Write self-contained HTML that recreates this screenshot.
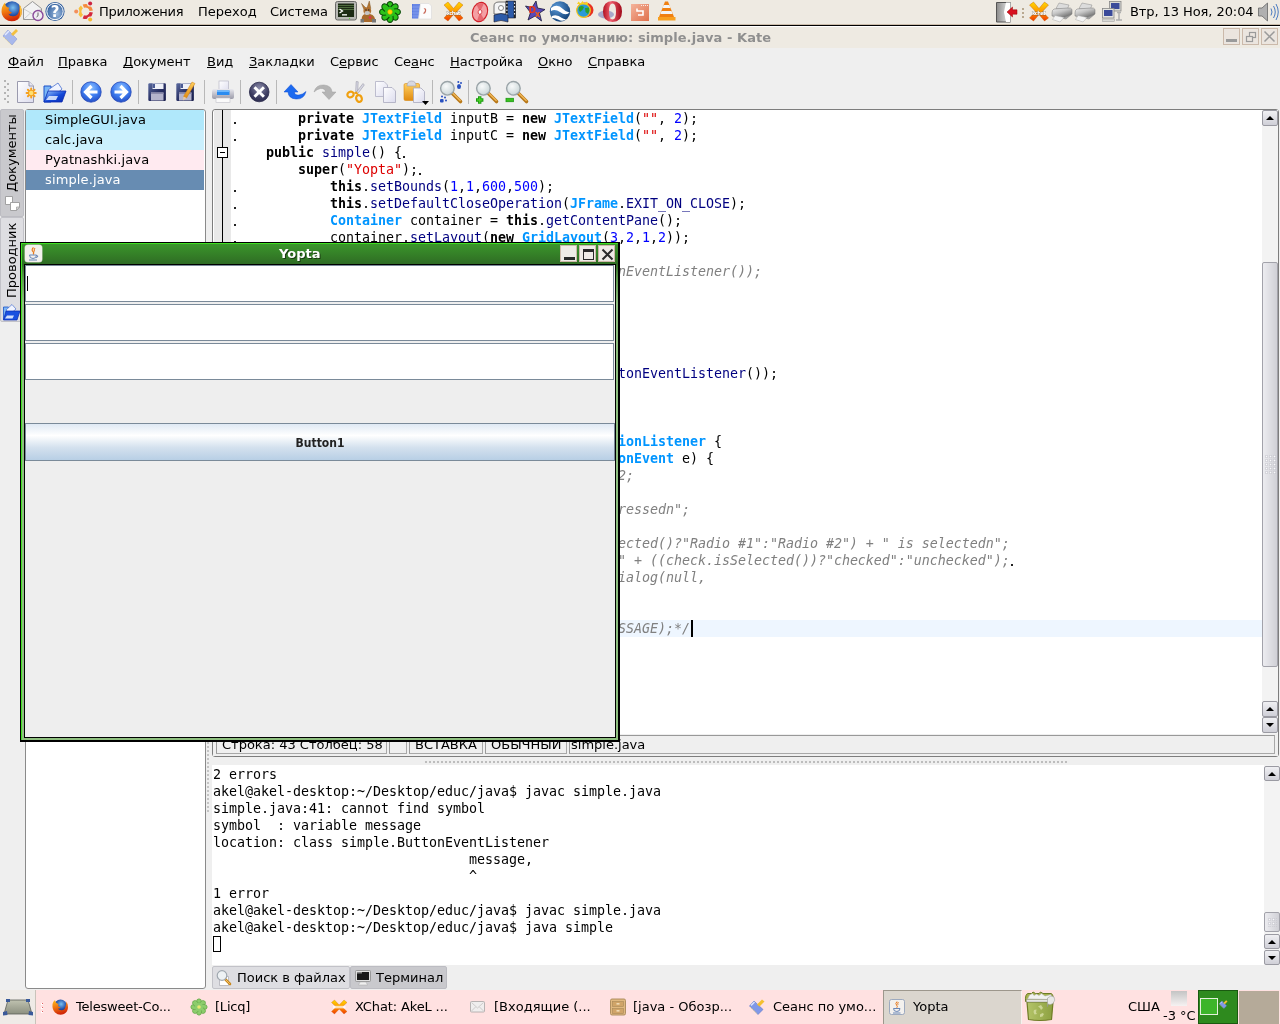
<!DOCTYPE html>
<html><head><meta charset="utf-8"><title>Kate</title>
<style>
*{box-sizing:border-box;margin:0;padding:0}
html,body{width:1280px;height:1024px;overflow:hidden;background:#efefef}
body{font-family:"DejaVu Sans","Liberation Sans",sans-serif;font-size:13px;color:#000;position:relative}
.abs{position:absolute}
body>div{will-change:transform}
.t{position:absolute;white-space:pre;line-height:16px}
.mono{font-family:"DejaVu Sans Mono","Liberation Mono",monospace;font-size:13.33px;letter-spacing:-0.026px}
u{text-decoration:underline;text-underline-offset:1px;text-decoration-skip-ink:none}
/* top panel */
#panel{left:0;top:0;width:1280px;height:27px;background:#eeeae2;border-bottom:1px solid #fff;box-shadow:inset 0 -1px 0 #000,inset 0 -2px 0 #cbbdac}
/* kate title */
#ktitle{left:0;top:27px;width:1280px;height:21px;background:#eeeae2}
#ktitle .tt{left:470px;top:3px;font-weight:bold;color:#8f8f8f;font-size:13px;letter-spacing:0.07px}
#menubar{left:0;top:48px;width:1280px;height:28px;background:#efefef}
#toolbar{left:0;top:76px;width:1280px;height:32px;background:#efefef}
/* code */
.cl{position:absolute;left:0;white-space:pre;height:17px;line-height:17px}
.k{font-weight:bold}
.ty{color:#0095ff;font-weight:bold}
.fn{color:#000080}
.st{color:#dd0000}
.nu{color:#0000ff}
.cm{color:#808080;font-style:italic}

#editor{left:212px;top:109px;width:1067px;height:648px;background:#fff;border:1px solid #7d7d7d;border-radius:3px}
#editor b{font-weight:bold}
#editor i{font-style:normal}
#editor em{font-style:italic}
.tm{width:2px;height:2px;background:#222}
.sbtrack{background:#f3f3f3}
.sbbtn{background:linear-gradient(#f0f0f3,#cfcfd7);border:1px solid #9a9aa2;border-radius:2px}
.sbthumb{background:linear-gradient(90deg,#ececf0,#d0d0d6);border:1px solid #a2a2aa;border-radius:2px}
.up,.dn{position:absolute;left:3px;top:4px;width:0;height:0;border-left:4px solid transparent;border-right:4px solid transparent}
.up{border-bottom:4px solid #000;top:5px}
.dn{border-top:4px solid #000;top:5px}
/* terminal */
#term{left:212px;top:765px;width:1052px;height:200px;background:#fff}
.tl{position:absolute;left:1px;white-space:pre;height:17px;line-height:17px}

.vt{transform:rotate(-90deg);transform-origin:0 0;height:16px}
#doclist{left:25px;top:109px;width:181px;height:880px;background:#fff;border:1px solid #8a8a8a;border-radius:3px}
.di{position:absolute;left:0;width:178px;height:20px;line-height:19px;padding-left:19px;white-space:pre;letter-spacing:0.13px}
#status{left:213px;top:734px;width:1065px;height:22px}
.sf{position:absolute;top:1px;height:19px;border:1px solid #a8a8a8;border-top-color:#999;border-left-color:#999}
#tscroll{left:1264px;top:765px;width:16px;height:200px}
#btabs{left:212px;top:966px;width:300px;height:23px}
#yopta{left:20px;top:242px;width:600px;height:500px}
.jf{position:absolute;left:0;width:589px;height:37px;background:#fff;border:1px solid #7a8a99;box-shadow:inset 0 0 0 1px #fff}
.wb{position:absolute;top:3px;width:17px;height:17px;background:#efebe7;border:1px solid #cdb9aa}
/* bottom panel */
#bpanel{left:0;top:990px;width:1280px;height:34px;background:#ffe1e1}
</style></head><body>
<div id="panel" class="abs">
<svg class="abs" style="left:0;top:0" width="1280" height="25" viewBox="0 0 1280 25">
<defs>
<radialGradient id="pFx" cx="0.55" cy="0.35" r="0.6"><stop offset="0" stop-color="#7ac0f0"/><stop offset="0.6" stop-color="#2a5ab0"/><stop offset="1" stop-color="#10206a"/></radialGradient>
<linearGradient id="pFox" x1="0" y1="0" x2="0.3" y2="1"><stop offset="0" stop-color="#ffc020"/><stop offset="0.5" stop-color="#f07810"/><stop offset="1" stop-color="#d02808"/></linearGradient>
<radialGradient id="pHelp" cx="0.6" cy="0.65" r="0.7"><stop offset="0" stop-color="#9ab8dc"/><stop offset="1" stop-color="#2f5d9c"/></radialGradient>
<linearGradient id="pX" x1="0" y1="0" x2="0" y2="1"><stop offset="0" stop-color="#ffd800"/><stop offset="0.5" stop-color="#ff9800"/><stop offset="1" stop-color="#f03800"/></linearGradient>
<linearGradient id="pGray" x1="0" y1="0" x2="1" y2="0"><stop offset="0" stop-color="#8a8a8a"/><stop offset="1" stop-color="#f0f0f0"/></linearGradient>
<radialGradient id="pGE" cx="0.35" cy="0.3" r="0.8"><stop offset="0" stop-color="#5a9ad8"/><stop offset="1" stop-color="#0c3a70"/></radialGradient>
<linearGradient id="pOp" x1="0" y1="0" x2="1" y2="0"><stop offset="0" stop-color="#b01020"/><stop offset="0.4" stop-color="#f06070"/><stop offset="1" stop-color="#a00818"/></linearGradient>
<linearGradient id="pSal" x1="0" y1="0" x2="1" y2="1"><stop offset="0" stop-color="#f4b49c"/><stop offset="1" stop-color="#e0704c"/></linearGradient>
<linearGradient id="pPrn" x1="0" y1="0" x2="0.600" y2="1"><stop offset="0" stop-color="#f4f4f4"/><stop offset="0.450" stop-color="#c4c4c4"/><stop offset="0.850" stop-color="#7c7c7c"/><stop offset="1" stop-color="#b0b0b0"/></linearGradient>
</defs>
<!-- firefox -->
<circle cx="12" cy="10.500" r="9.300" fill="url(#pFx)"/>
<path d="M3.500 4.500Q0.500 9 2 14.500Q4.500 21 11.500 21.300Q18.500 21.300 21.300 15Q22.800 9.500 19.500 4.500Q20.300 8 19 11Q18.300 15.800 13.500 16.300Q9.500 16.500 8.300 13.800Q10.800 14.300 12 12.800L9 10.800Q7.800 9.300 9.300 7.800Q7 7.500 6 6Q5 4.500 5.200 2.500Q4 3.300 3.500 4.500Z" fill="url(#pFox)"/>
<path d="M19.500 4.500Q22.800 9.500 21.300 15Q20 18 18 19.500Q21 15 19.800 9Z" fill="#ffd840" opacity="0.800"/>
<!-- mail -->
<path d="M23.500 8.500L32.500 1.500L41.500 8.500V19.500H23.500Z" fill="#f2f2f2" stroke="#8c8c8c" stroke-width="0.900"/>
<path d="M24 9L32.500 14L41 9M24 19L30.500 13M41 19L34.500 13" fill="none" stroke="#c4c4c4" stroke-width="0.800"/>
<circle cx="38" cy="15.500" r="5" fill="#f0ecf2" stroke="#8a4a9a" stroke-width="1.400"/>
<path d="M38 12.500V15.800L36.500 17" fill="none" stroke="#555" stroke-width="0.900"/>
<!-- help -->
<circle cx="55" cy="11.500" r="9.600" fill="#2f5d9c"/>
<circle cx="55" cy="11.500" r="8.200" fill="url(#pHelp)" stroke="#fff" stroke-width="1"/>
<text x="55" y="17" font-family="DejaVu Sans,Liberation Sans,sans-serif" font-weight="bold" font-size="15" fill="#fff" text-anchor="middle">?</text>
<!-- ubuntu -->
<path d="M81.93 16.07A5.8 5.8 0 0 1 81.93 6.93" fill="none" stroke="#f8c040" stroke-width="3.400"/><path d="M83.33 6.12A5.8 5.8 0 0 1 91.24 10.69" fill="none" stroke="#f58a3c" stroke-width="3.400"/><path d="M91.24 12.31A5.8 5.8 0 0 1 83.33 16.88" fill="none" stroke="#d4283c" stroke-width="3.400"/><circle cx="76.50" cy="11.50" r="2.900" fill="#ede9e2"/><circle cx="76.20" cy="11.50" r="2" fill="#f4905a"/><circle cx="90.00" cy="3.71" r="2.900" fill="#ede9e2"/><circle cx="90.15" cy="3.45" r="2" fill="#cc2440"/><circle cx="90.00" cy="19.29" r="2.900" fill="#ede9e2"/><circle cx="90.15" cy="19.55" r="2" fill="#f8b830"/>
<!-- terminal -->
<rect x="335.500" y="1.500" width="21" height="18.500" rx="2" fill="#b8b8b4" stroke="#6a6a68" stroke-width="1"/>
<rect x="338" y="3.500" width="16" height="13.500" fill="#1c2a14"/>
<g stroke="#5a7a48" stroke-width="1" opacity="0.800"><path d="M338 5.500H354M338 7.500H354M338 9.500H354"/></g>
<path d="M339.500 9L342.500 11L339.500 13" stroke="#fff" stroke-width="1.300" fill="none"/><rect x="342" y="14.200" width="5" height="1.300" fill="#fff"/>
<circle cx="349.500" cy="18.500" r="0.700" fill="#6c4"/>
<!-- emule donkey -->
<path d="M364 9.500L361.500 3.500L366 8ZM367 8L369.300 1L370.800 8.500Z" fill="#b87830" stroke="#6a4418" stroke-width="0.400"/>
<path d="M362 22Q360.500 15.500 365 14H370Q376 15.500 375 22Z" fill="#a86a2c"/>
<ellipse cx="367.300" cy="10.800" rx="3.900" ry="3.600" fill="#b07030"/>
<ellipse cx="367.300" cy="13" rx="2.700" ry="2.100" fill="#c4c4c4"/><circle cx="366" cy="10" r="0.700" fill="#222"/><circle cx="368.800" cy="10" r="0.700" fill="#222"/>
<path d="M360.500 19H364V22.500H360.500ZM372 19H376V22.500H372Z" fill="#777"/><circle cx="370" cy="17.500" r="1.300" fill="#e03050"/>
<!-- icq flower -->
<g transform="translate(390,12)"><g fill="#2cc21a" stroke="#0a4a08" stroke-width="1.100">
<ellipse cx="0" cy="-6" rx="3.200" ry="4.400"/><ellipse cx="0" cy="-6" rx="3.200" ry="4.400" transform="rotate(45)"/><ellipse cx="0" cy="-6" rx="3.200" ry="4.400" transform="rotate(90)"/><ellipse cx="0" cy="-6" rx="3.200" ry="4.400" transform="rotate(135)"/><ellipse cx="0" cy="-6" rx="3.200" ry="4.400" transform="rotate(180)"/><ellipse cx="0" cy="-6" rx="3.200" ry="4.400" transform="rotate(225)"/><ellipse cx="0" cy="-6" rx="3.200" ry="4.400" transform="rotate(270)"/><ellipse cx="0" cy="-6" rx="3.200" ry="4.400" transform="rotate(315)"/></g>
<circle r="5" fill="#2cc21a"/><circle r="2.400" fill="#ffd800" stroke="#c89a00" stroke-width="0.500"/></g>
<!-- doc icon -->
<path d="M412 4H420L418.500 18.500H412Z" fill="#5a7ae0"/><g stroke="#9ab0f4" stroke-width="0.500"><path d="M412 7H420M412 10H419.500M412 13H419M412 16H418.800M414 4V18.500M416 4V18.500M418 4V18.500"/></g>
<path d="M420.500 3.500H429L431.500 6V19H418.500Z" fill="#fcfcfc" stroke="#d8d8d8" stroke-width="0.600"/><path d="M424 9Q426 8 425.500 11Q425 13 423.500 13.500" stroke="#c86858" stroke-width="1.200" fill="none"/>
<!-- xchat -->
<g id="xch"><path d="M444 5L448 2L453.500 8.500L459 2L463 5L457 11.500L463 18L459 21L453.500 14.500L448 21L444 18L450 11.500Z" fill="url(#pX)" stroke="#c05800" stroke-width="0.400"/>
<text x="453.500" y="14.500" font-family="DejaVu Sans,Liberation Sans,sans-serif" font-weight="bold" font-size="5.500" fill="#fff" text-anchor="middle" stroke="#444" stroke-width="0.350" paint-order="stroke" textLength="14">xchat</text></g>
<use href="#xch" x="585.500"/>
<!-- cd -->
<ellipse cx="480" cy="12" rx="7.400" ry="9.800" fill="#f4a0a4" stroke="#d02028" stroke-width="1.200" transform="rotate(18 480 12)"/>
<path d="M480 12L476 3.500L484 3ZM480 12L484.500 20.500L477 21Z" fill="#e05058" opacity="0.700"/>
<ellipse cx="480" cy="12" rx="1.800" ry="2.300" fill="#fff" stroke="#d02028" stroke-width="0.700" transform="rotate(18 480 12)"/>
<!-- film -->
<path d="M494 14V6Q494 2 499 2H506V14Z" fill="#f4f4f4" stroke="#555" stroke-width="0.800"/><circle cx="501" cy="8" r="2.500" fill="#fff" stroke="#888" stroke-width="1"/>
<rect x="506" y="1" width="9.500" height="17" fill="#2c5aa8" stroke="#1a1a2a" stroke-width="0.600"/><rect x="506" y="1" width="1.800" height="17" fill="#222"/><rect x="513.700" y="1" width="1.800" height="17" fill="#222"/>
<path d="M494 15Q501 12 508 15V22Q501 19 494 22Z" fill="#2c5aa8" stroke="#1a1a2a" stroke-width="0.600"/>
<g fill="#fff"><rect x="506.400" y="2.500" width="1" height="1.500"/><rect x="506.400" y="6" width="1" height="1.500"/><rect x="506.400" y="9.500" width="1" height="1.500"/><rect x="506.400" y="13" width="1" height="1.500"/><rect x="514.100" y="2.500" width="1" height="1.500"/><rect x="514.100" y="6" width="1" height="1.500"/><rect x="514.100" y="9.500" width="1" height="1.500"/><rect x="514.100" y="13" width="1" height="1.500"/></g>
<!-- dx star -->
<path d="M536 1L537.500 8L545 9.500L539.500 13L541.500 21L535 16L528 20L530.500 12.500L525.500 6L532 7.500Z" fill="#5a4ab8" stroke="#1a1a3a" stroke-width="0.800"/>
<text x="528.500" y="13" font-family="DejaVu Sans,Liberation Sans,sans-serif" font-weight="bold" font-size="9" fill="#f03818">D</text><text x="535" y="17" font-family="DejaVu Sans,Liberation Sans,sans-serif" font-weight="bold" font-size="8" fill="#f06018">x</text>
<!-- google earth -->
<circle cx="560" cy="11.500" r="10.200" fill="url(#pGE)"/>
<path d="M551 8Q557 3 563 9Q567 13 570 12Q566 16.500 560 12Q555 8.500 551 11Z" fill="#fff"/><path d="M552 16Q557 14 562 18Q565 20 567 18.500Q563 22.500 558 19.500Q555 17.500 552 18Z" fill="#fff"/>
<!-- firestarter globe -->
<ellipse cx="585" cy="10" rx="8.500" ry="7.500" fill="#e83020"/>
<circle cx="583.500" cy="10.500" r="6.800" fill="#2a9ad8" stroke="#f0c818" stroke-width="1.200"/>
<path d="M579 7Q582 5 584 7L582.500 10L580 12Q578 10 579 7ZM585 8L589 7.500Q590 11 588 14L585.500 12Z" fill="#28a030"/>
<path d="M577 4L578.500 1.500L580.500 3.500L582.500 1L584.500 3.500L587 1.500L588.500 4.500Z" fill="#f8d020"/>
<!-- opera -->
<ellipse cx="606" cy="14.500" rx="8" ry="4" fill="#8c8cc0" opacity="0.700"/>
<path d="M612.500 1Q622 1 622 11.500Q622 22 612.500 22Q603 22 603 11.500Q603 1 612.500 1ZM612.500 3.500Q609 3.500 609 11.500Q609 19.500 612.500 19.500Q616 19.500 616 11.500Q616 3.500 612.500 3.500Z" fill="url(#pOp)" fill-rule="evenodd"/>
<!-- salmon square -->
<rect x="631" y="4" width="18" height="17" fill="url(#pSal)"/>
<path d="M637 8.500V11H643V15H638" fill="none" stroke="#fff" stroke-width="1.600"/>
<g fill="#fff" opacity="0.800"><rect x="641" y="5" width="1" height="1"/><rect x="643" y="5" width="1" height="1"/><rect x="645" y="5" width="1" height="1"/><rect x="647" y="5" width="1" height="1"/></g>
<!-- vlc -->
<path d="M665 1.500H668L674 17H659Z" fill="#f08010"/><path d="M663.700 5H669.300L670.500 8H662.500ZM661.500 11H671.500L672.600 14H660.400Z" fill="#f4f4f4"/>
<path d="M658 17H675.500V20.500H658Z" fill="#f8a020"/>
<!-- logout -->
<path d="M996.500 2.500H1010.500V22H996.500Z" fill="url(#pGray)" stroke="#555" stroke-width="1"/><path d="M1006 2.500H1010.500V22H1006L1004 12Z" fill="#fff"/>
<path d="M1007 12L1012.500 7V9.800H1017V14.200H1012.500V17Z" fill="#d81020" stroke="#900" stroke-width="0.500"/>
<g fill="#b8a890"><rect x="1022" y="8" width="2" height="2"/><rect x="1022" y="12" width="2" height="2"/><rect x="1022" y="16" width="2" height="2"/></g>
<!-- printers -->
<g id="prn"><path d="M1059 3L1069 5L1067 10L1056 8.500Z" fill="#dcdcdc" stroke="#8a8a8a" stroke-width="0.500"/>
<path d="M1054 9Q1052 10 1052 13V16L1066 19L1072 14V9.500Q1071 7.500 1068 8Z" fill="url(#pPrn)" stroke="#777" stroke-width="0.500"/>
<path d="M1055 15.500L1064 17.500L1060 22L1052.500 19.500Z" fill="#f4f4f4" stroke="#aaa" stroke-width="0.500"/></g>
<use href="#prn" x="23"/>
<!-- network -->
<rect x="1109.500" y="1.500" width="11.500" height="9.500" fill="#d8d8d4" stroke="#888" stroke-width="0.800"/><rect x="1111" y="3" width="8.500" height="6" fill="#3a4a9a"/>
<rect x="1102.500" y="8.500" width="11.500" height="9.500" fill="#e4e4e0" stroke="#888" stroke-width="0.800"/><rect x="1104" y="10" width="8.500" height="6" fill="#3a4a9a"/>
<rect x="1102.500" y="19" width="12" height="2.500" fill="#d8d8d4" stroke="#999" stroke-width="0.500"/><path d="M1117 12.500H1121M1119 12.500V20M1116 20H1122" stroke="#b0b0b0" stroke-width="1.500" fill="none"/>
<!-- volume -->
<path d="M1258.500 8H1262L1267.500 3V21L1262 16H1258.500Z" fill="#b0b0b0" stroke="#666" stroke-width="0.800"/>
<path d="M1271 8.500Q1273 12 1271 15.500M1273.500 6Q1277 12 1273.500 18M1276 4Q1280.500 12 1276 20" fill="none" stroke="#4a7ac0" stroke-width="1"/>
</svg>

<div class="t" style="left:99px;top:4px;letter-spacing:-0.3px">Приложения</div>
<div class="t" style="left:198px;top:4px">Переход</div>
<div class="t" style="left:270px;top:4px">Система</div>
<div class="t" style="left:1130px;top:4px;letter-spacing:-0.08px">Втр, 13 Ноя, 20:04</div>
</div>
<div id="ktitle" class="abs"><div class="t tt">Сеанс по умолчанию: simple.java - Kate</div>
<svg class="abs" style="left:0;top:0" width="1280" height="21" viewBox="0 27 1280 21">
<path d="M3 36L8 30L17 39L12 45Z" fill="#a8b8ec" stroke="#8a9ad8" stroke-width="0.600"/><path d="M5 35L9 31" stroke="#e4eaff" stroke-width="1.500"/><path d="M3.500 37L11 44.500" stroke="#e8d890" stroke-width="1" stroke-dasharray="1.500 1"/>
<path d="M11 34L16 29L18 31L13 36Z" fill="#f4c040"/>
<g fill="#ebe5df" stroke="#cbb9aa" stroke-width="1"><rect x="1223.500" y="28.500" width="16" height="16"/><rect x="1242.500" y="28.500" width="16" height="16"/><rect x="1261.500" y="28.500" width="16" height="16"/></g>
<rect x="1226" y="39" width="11" height="3" fill="#9a9a9a"/>
<g fill="none" stroke="#9a9a9a" stroke-width="1.200"><rect x="1249.500" y="32.500" width="6" height="5"/><rect x="1246.500" y="36.500" width="6" height="5" fill="#ebe5df"/></g>
<path d="M1264.500 31.500L1274.500 41.500M1274.500 31.500L1264.500 41.500" stroke="#9a9a9a" stroke-width="1.500"/>
</svg></div>
<div id="menubar" class="abs">
<div class="t" style="left:8px;top:6px"><u>Ф</u>айл</div>
<div class="t" style="left:58px;top:6px"><u>П</u>равка</div>
<div class="t" style="left:123px;top:6px"><u>Д</u>окумент</div>
<div class="t" style="left:207px;top:6px"><u>В</u>ид</div>
<div class="t" style="left:249px;top:6px"><u>З</u>акладки</div>
<div class="t" style="left:330px;top:6px">С<u>е</u>рвис</div>
<div class="t" style="left:394px;top:6px">Се<u>а</u>нс</div>
<div class="t" style="left:450px;top:6px"><u>Н</u>астройка</div>
<div class="t" style="left:538px;top:6px"><u>О</u>кно</div>
<div class="t" style="left:588px;top:6px"><u>С</u>правка</div>
</div>
<div id="toolbar" class="abs">
<svg class="abs" style="left:0;top:0" width="1280" height="33" viewBox="0 0 1280 33">
<defs>
<linearGradient id="gPage" x1="0" y1="0" x2="1" y2="1"><stop offset="0" stop-color="#ffffff"/><stop offset="1" stop-color="#dcdcee"/></linearGradient>
<radialGradient id="gBlue" cx="0.5" cy="0.3" r="0.8"><stop offset="0" stop-color="#8cc0ff"/><stop offset="0.5" stop-color="#3f7df0"/><stop offset="1" stop-color="#1b3fb8"/></radialGradient>
<radialGradient id="gDark" cx="0.5" cy="0.3" r="0.8"><stop offset="0" stop-color="#8a8aa8"/><stop offset="0.6" stop-color="#3e3e62"/><stop offset="1" stop-color="#26264a"/></radialGradient>
<linearGradient id="gFlop" x1="0" y1="0" x2="1" y2="1"><stop offset="0" stop-color="#5a6aa0"/><stop offset="0.5" stop-color="#2a3266"/><stop offset="1" stop-color="#1a1f4c"/></linearGradient>
<linearGradient id="gFold" x1="0" y1="0" x2="1" y2="1"><stop offset="0" stop-color="#9ccaff"/><stop offset="0.55" stop-color="#1448d8"/><stop offset="1" stop-color="#0a2ab0"/></linearGradient>
<linearGradient id="gOr" x1="0" y1="0" x2="0" y2="1"><stop offset="0" stop-color="#ffd060"/><stop offset="1" stop-color="#e08a10"/></linearGradient>
<radialGradient id="gLens" cx="0.4" cy="0.35" r="0.7"><stop offset="0" stop-color="#f8fafa"/><stop offset="1" stop-color="#c8d4d6"/></radialGradient>
<linearGradient id="gPr" x1="0" y1="0" x2="0" y2="1"><stop offset="0" stop-color="#e8e8ee"/><stop offset="1" stop-color="#9a9aa8"/></linearGradient>
</defs>
<!-- grip -->
<g fill="#b4b4b4"><rect x="4" y="4" width="2" height="2"/><rect x="7" y="7" width="2" height="2"/><rect x="4" y="10" width="2" height="2"/><rect x="7" y="13" width="2" height="2"/><rect x="4" y="16" width="2" height="2"/><rect x="7" y="19" width="2" height="2"/><rect x="4" y="22" width="2" height="2"/><rect x="7" y="25" width="2" height="2"/></g>
<!-- separators -->
<g stroke="#b8b8b8" stroke-width="1"><path d="M72.5 4V28M138.5 4V28M204.5 4V28M240.5 4V28M276.5 4V28M432.5 4V28M468.5 4V28"/></g>
<!-- new doc -->
<path d="M17.5 5.5H29L33.5 10V26.5H17.5Z" fill="url(#gPage)" stroke="#9a9aae" stroke-width="1"/>
<path d="M29 5.5V10H33.5" fill="#e8e8f4" stroke="#9a9aae" stroke-width="1"/>
<g transform="translate(31.2,17)"><circle r="3.2" fill="#ffc84a"/><g stroke="#f5a020" stroke-width="2" stroke-linecap="round"><path d="M0-4.6V4.6M-4.6 0H4.6M-3.3-3.3L3.3 3.3M-3.3 3.3L3.3-3.3"/></g><circle r="2.2" fill="#ffe070"/></g>
<!-- open folder -->
<path d="M44 10H51V26H44Z" fill="#7ab6f6" stroke="#1a50c8" stroke-width="1"/>
<path d="M48 14L58 7L62 13L52 22Z" fill="#f0f4ff" stroke="#4a70d0" stroke-width="0.8"/>
<path d="M48 15H66L62 26H44Z" fill="url(#gFold)" stroke="#0a2ab0" stroke-width="0.8"/>
<path d="M46 24L49 20H58L56 24Z" fill="#e8eeff" opacity="0.85"/>
<!-- back / forward -->
<circle cx="91" cy="16" r="10.2" fill="url(#gBlue)" stroke="#2448b8" stroke-width="0.8"/>
<path d="M97.500 16H86M91.500 10L85.500 16L91.500 22" fill="none" stroke="#fff" stroke-width="3.200" stroke-linejoin="miter"/>
<circle cx="121" cy="16" r="10.2" fill="url(#gBlue)" stroke="#2448b8" stroke-width="0.8"/>
<path d="M114.500 16H126M120.500 10L126.500 16L120.500 22" fill="none" stroke="#fff" stroke-width="3.200" stroke-linejoin="miter"/>
<!-- save -->
<g id="flop"><rect x="148.3" y="7.3" width="17.6" height="17.6" rx="1.2" fill="url(#gFlop)"/><rect x="152.5" y="7.5" width="11" height="5.5" fill="#eef0f8"/><rect x="152.5" y="8" width="2.5" height="4" fill="#4a5a94"/><rect x="151" y="16.5" width="12.5" height="8" fill="#b4b4cc"/><rect x="151" y="16.5" width="12.5" height="1.5" fill="#8c8cac"/></g>
<use href="#flop" x="28"/>
<path d="M192 6L195 7.5L186.5 22L183.5 20.5Z" fill="url(#gOr)" stroke="#d08010" stroke-width="0.5"/><path d="M183.5 20.5L186.5 22L183 24.5Z" fill="#e8c8a0"/>
<!-- print -->
<rect x="219" y="5" width="9.5" height="11" fill="url(#gPage)" stroke="#b0b0c0" stroke-width="0.6"/>
<path d="M214 13Q212 13 212 16V21Q212 23 214 23H232Q234 23 234 21V16Q234 13 232 13Z" fill="url(#gPr)"/>
<rect x="217" y="14.5" width="12.5" height="4.5" fill="#2a8cf0"/><rect x="217" y="14.5" width="12.5" height="1.5" fill="#6ab8ff"/>
<rect x="216" y="22" width="14" height="4.5" fill="#fafafa" stroke="#c0c0c8" stroke-width="0.6"/>
<!-- close -->
<circle cx="259.2" cy="16" r="9.8" fill="url(#gDark)" stroke="#2a2a4a" stroke-width="0.8"/>
<path d="M254.5 11.3L263.9 20.7M263.9 11.3L254.5 20.7" stroke="#fff" stroke-width="3" stroke-linecap="butt"/>
<!-- undo -->
<path d="M284 16L291 8.5L298 16H294.5Q294.5 19.5 299 19Q303 18.5 306 15.5Q304 23.5 296 23Q288.5 22.5 288 16Z" fill="#1c6af0" stroke="#0a48d0" stroke-width="0.5"/>
<!-- redo -->
<path d="M336 16L329 23.5L322 16H325.5Q325 12 320.5 12.5Q317 13 314 16Q316 8.5 324 9Q331.5 9.5 332 16Z" fill="#b4b4b4" stroke="#a0a0a0" stroke-width="0.5"/>
<!-- cut -->
<path d="M356.2 5.5L358.2 5.8L357.6 17L355.6 17Z" fill="#d8d8e4" stroke="#8a8a9a" stroke-width="0.5"/>
<path d="M363 7.5L364.3 9L357.5 18L355.8 16.8Z" fill="#d8d8e4" stroke="#8a8a9a" stroke-width="0.5"/>
<ellipse cx="350.5" cy="18.5" rx="3.2" ry="2.8" fill="none" stroke="#f0a010" stroke-width="2.2" transform="rotate(-25 350.5 18.5)"/>
<ellipse cx="359" cy="22.5" rx="2.8" ry="3.4" fill="none" stroke="#f0a010" stroke-width="2.2" transform="rotate(-20 359 22.5)"/>
<path d="M353 17L357 15.5L358.5 19Z" fill="#f0a010"/>
<!-- copy -->
<path d="M375.5 5.500H384L387.5 9V20.5H375.5Z" fill="url(#gPage)" stroke="#b0b0c4" stroke-width="0.8"/>
<path d="M383.5 11.5H392L395.500 15V26.500H383.5Z" fill="url(#gPage)" stroke="#a8a8bc" stroke-width="0.8"/>
<!-- paste -->
<rect x="404" y="7.500" width="15.5" height="17" rx="1.5" fill="url(#gOr)" stroke="#d88a10" stroke-width="0.6"/>
<path d="M407 10Q407 5 411.500 5Q416 5 416 10Z" fill="#d8d8e0" stroke="#a0a0ac" stroke-width="0.6"/>
<path d="M413.500 12H421L424.500 15.5V26.500H413.500Z" fill="url(#gPage)" stroke="#a8a8bc" stroke-width="0.8"/>
<path d="M422 25H429L425.500 29Z" fill="#000"/>
<!-- find -->
<g id="mag"><path d="M452.500 17.500L460.500 25.500" stroke="#b87818" stroke-width="3.6" stroke-linecap="round"/><path d="M452.800 17.200L460.200 24.600" stroke="#f0b858" stroke-width="1.4" stroke-linecap="round"/><circle cx="447.400" cy="12.300" r="6.800" fill="url(#gLens)" stroke="#9aa4a8" stroke-width="1.4"/></g>
<g fill="#2850c0"><ellipse cx="459" cy="10.500" rx="2" ry="2.600"/><circle cx="458.300" cy="6" r="1"/><circle cx="461" cy="7" r="1"/><rect x="440" y="23" width="3.600" height="3.600" rx="1"/><circle cx="442" cy="20.500" r="1"/><circle cx="445" cy="21.500" r="1"/><circle cx="446" cy="24.500" r="1"/></g>
<use href="#mag" x="36"/>
<path d="M476 24H483.400M479.700 20.300V27.700" stroke="#1a9a10" stroke-width="3.400"/><path d="M477 24H482.400M479.700 21.300V26.700" stroke="#4cd028" stroke-width="1.600"/>
<use href="#mag" x="66"/>
<rect x="506" y="22.300" width="7.400" height="3.400" fill="#3cc020" stroke="#1a9a10" stroke-width="0.8"/>
</svg>
</div>
<div id="sidebar" class="abs">
<div class="abs" style="left:0;top:109px;width:24px;height:108px;background:#c9c9cd;border:1px solid #bcbcc2;border-radius:2px"></div>
<div class="abs" style="left:0;top:217px;width:24px;height:105px;background:#dedee2;border:1px solid #c2c2c8;border-radius:2px"></div>
<div class="t vt" style="left:4px;top:192px">Документы</div>
<div class="t vt" style="left:4px;top:298px">Проводник</div>
<svg class="abs" style="left:0;top:190px" width="24" height="135" viewBox="0 190 24 135">
<path d="M5.500 196.500H12.500V204.500H5.500Z" fill="#fff" stroke="#9a9a9a" stroke-width="0.900"/><path d="M10.500 202.500H19.500V207L16.500 210.500H10.500Z" fill="#fff" stroke="#9a9a9a" stroke-width="0.900"/><path d="M16.500 210.500V207H19.500Z" fill="#ddd" stroke="#9a9a9a" stroke-width="0.700"/>
<path d="M3.500 307H8.500V319.500H3.500Z" fill="#7ab6f6" stroke="#1a50c8" stroke-width="0.800"/><path d="M6 310L12 304.500L16 309L9 315Z" fill="#f0f4ff" stroke="#4a70d0" stroke-width="0.700"/><path d="M6 311H20L17 320H3.500Z" fill="#1a50e0" stroke="#0a2ab0" stroke-width="0.700"/><path d="M5 318.500L7 315.500H14L12.500 318.500Z" fill="#e8eeff" opacity="0.900"/>
</svg>
<div id="doclist" class="abs">
<div class="di" style="top:0;background:#b0e8fb">SimpleGUI.java</div>
<div class="di" style="top:20px;background:#cbf0fd">calc.java</div>
<div class="di" style="top:40px;background:#ffeaf0">Pyatnashki.java</div>
<div class="di" style="top:60px;background:#678cb2;color:#fff">simple.java</div>
</div>
</div>
<div id="editor" class="abs mono">
<div class="abs" style="left:1px;top:0;width:17px;height:624px;background:#e9e9e9"></div>
<div class="abs" style="left:9px;top:0;width:1px;height:624px;background:#000"></div>
<div class="abs" style="left:4px;top:37px;width:11px;height:11px;background:#fff;border:1px solid #000"><i class="abs" style="left:2px;top:4px;width:5px;height:1px;background:#000"></i></div>
<div class="abs" style="left:19px;top:510px;width:1030px;height:17px;background:#eef6ff"></div>
<div class="abs" style="left:0;top:624px;width:1065px;height:22px;background:#efefef"></div>
<div id="code" class="abs" style="left:21px;top:-1px">
<div class="cl" style="top:1px">        <b class="k">private</b> <b class="ty">JTextField</b> inputB = <b class="k">new</b> <b class="ty">JTextField</b>(<i class="st">""</i>, <i class="nu">2</i>);</div>
<div class="cl" style="top:18px">        <b class="k">private</b> <b class="ty">JTextField</b> inputC = <b class="k">new</b> <b class="ty">JTextField</b>(<i class="st">""</i>, <i class="nu">2</i>);</div>
<div class="cl" style="top:35px">    <b class="k">public</b> <i class="fn">simple</i>() {</div>
<div class="cl" style="top:52px">        <b class="k">super</b>(<i class="st">"Yopta"</i>);</div>
<div class="cl" style="top:69px">            <b class="k">this</b>.<i class="fn">setBounds</i>(<i class="nu">1</i>,<i class="nu">1</i>,<i class="nu">600</i>,<i class="nu">500</i>);</div>
<div class="cl" style="top:86px">            <b class="k">this</b>.<i class="fn">setDefaultCloseOperation</i>(<b class="ty">JFrame</b>.<i class="fn">EXIT_ON_CLOSE</i>);</div>
<div class="cl" style="top:103px">            <b class="ty">Container</b> container = <b class="k">this</b>.<i class="fn">getContentPane</i>();</div>
<div class="cl" style="top:120px">            container.<i class="fn">setLayout</i>(<b class="k">new</b> <b class="ty">GridLayout</b>(<i class="nu">3</i>,<i class="nu">2</i>,<i class="nu">1</i>,<i class="nu">2</i>));</div>
<div class="cl" style="top:154px">            <em class="cm">/*button.addActionListener(new ButtonEventListener());</em></div>
<div class="cl" style="top:256px">                button.<i class="fn">addActionListener</i>(<b class="k">new</b> <i class="fn">ButtonEventListener</i>());</div>
<div class="cl" style="top:324px">        <b class="k">class</b> ButtonEventListener <b class="k">implements</b> <b class="ty">ActionListener</b> {</div>
<div class="cl" style="top:341px">                <b class="k">public void</b> <i class="fn">actionPerformed</i>(<b class="ty">ActionEvent</b> e) {</div>
<div class="cl" style="top:358px">             <em class="cm">/*String message = ""; int a = x + 2;</em></div>
<div class="cl" style="top:392px">                        <em class="cm">message += "Button was pressedn";</em></div>
<div class="cl" style="top:426px">                        <em class="cm">message += (radio1.isSelected()?"Radio #1":"Radio #2") + " is selectedn";</em></div>
<div class="cl" style="top:443px">                         <em class="cm">message += "CheckBox is" + ((check.isSelected())?"checked":"unchecked");</em></div>
<div class="cl" style="top:460px">                        <em class="cm">JOptionPane.showMessageDialog(null,</em></div>
<div class="cl" style="top:511px">                            <em class="cm">JOptionPane.PLAIN_MESSAGE);*/</em></div>
</div>
<i class="abs tm" style="left:21px;top:12px"></i><i class="abs tm" style="left:21px;top:29px"></i><i class="abs tm" style="left:21px;top:80px"></i><i class="abs tm" style="left:21px;top:97px"></i><i class="abs tm" style="left:21px;top:114px"></i><i class="abs tm" style="left:21px;top:131px"></i><i class="abs tm" style="left:190px;top:46px"></i><i class="abs tm" style="left:206px;top:63px"></i>
<i class="abs tm" style="left:798px;top:454px"></i>
<div class="abs" style="left:478px;top:510px;width:2px;height:17px;background:#000"></div>
<div class="abs sbtrack" style="left:1049px;top:0;width:16px;height:624px"></div>
<div class="abs sbbtn" style="left:1049px;top:0;width:16px;height:16px"><i class="up"></i></div>
<div class="abs sbthumb" style="left:1049px;top:152px;width:16px;height:405px"><i class="abs" style="left:2px;top:192px;width:11px;height:19px;background:radial-gradient(circle at 1.500px 1.500px,#fafafc 0.700px,#c0c0c8 1.200px,transparent 1.600px) 0 0/4px 4px"></i></div>
<div class="abs sbbtn" style="left:1049px;top:591px;width:16px;height:16px"><i class="up"></i></div>
<div class="abs sbbtn" style="left:1049px;top:607px;width:16px;height:16px"><i class="dn"></i></div>
</div>
<div id="status" class="abs">
<div class="sf" style="left:3px;width:171px"><span class="t" style="left:5px;top:1px">Строка: 43 Столбец: 58</span></div>
<div class="sf" style="left:176px;width:18px"></div>
<div class="sf" style="left:196px;width:74px"><span class="t" style="left:5px;top:1px">ВСТАВКА</span></div>
<div class="sf" style="left:272px;width:82px"><span class="t" style="left:5px;top:1px">ОБЫЧНЫЙ</span></div>
<div class="sf" style="left:356px;width:706px"><span class="t" style="left:1px;top:1px">simple.java</span></div>
</div>
<div class="abs" style="left:425px;top:761px;width:642px;height:2px;background:repeating-linear-gradient(90deg,#bdbdbd 0,#bdbdbd 2px,transparent 2px,transparent 4px)"></div>
<div class="abs" style="left:207px;top:742px;width:2px;height:70px;background:repeating-linear-gradient(180deg,#c4c4c4 0,#c4c4c4 2px,transparent 2px,transparent 4px)"></div>
<div id="term" class="abs mono">
<div class="tl" style="top:1px">2 errors</div>
<div class="tl" style="top:18px">akel@akel-desktop:~/Desktop/educ/java$ javac simple.java</div>
<div class="tl" style="top:35px">simple.java:41: cannot find symbol</div>
<div class="tl" style="top:52px">symbol  : variable message</div>
<div class="tl" style="top:69px">location: class simple.ButtonEventListener</div>
<div class="tl" style="top:86px">                                message,</div>
<div class="tl" style="top:103px">                                ^</div>
<div class="tl" style="top:120px">1 error</div>
<div class="tl" style="top:137px">akel@akel-desktop:~/Desktop/educ/java$ javac simple.java</div>
<div class="tl" style="top:154px">akel@akel-desktop:~/Desktop/educ/java$ java simple</div>
<div class="abs" style="left:1px;top:171px;width:8px;height:16px;border:1px solid #000"></div>
</div>
<div id="tscroll" class="abs">
<div class="abs sbtrack" style="left:0;top:0;width:16px;height:200px"></div>
<div class="abs sbbtn" style="left:0;top:1px;width:16px;height:15px"><i class="up"></i></div>
<div class="abs sbthumb" style="left:0;top:147px;width:16px;height:20px"><i class="abs" style="left:3px;top:5px;width:9px;height:9px;background:radial-gradient(circle at 1.500px 1.500px,#fafafc 0.700px,#c0c0c8 1.200px,transparent 1.600px) 0 0/4px 4px"></i></div>
<div class="abs sbbtn" style="left:0;top:169px;width:16px;height:15px"><i class="up"></i></div>
<div class="abs sbbtn" style="left:0;top:185px;width:16px;height:15px"><i class="dn"></i></div>
</div>
<div id="btabs" class="abs">
<div class="abs" style="left:0;top:0;width:138px;height:23px;background:#dedee2;border:1px solid #c2c2c8;border-radius:2px"></div>
<div class="abs" style="left:138px;top:0;width:97px;height:23px;background:#c9c9cd;border:1px solid #bcbcc2;border-radius:2px"></div>
<div class="t" style="left:25px;top:4px">Поиск в файлах</div>
<div class="t" style="left:164px;top:4px">Терминал</div>
<svg class="abs" style="left:0;top:0" width="240" height="23" viewBox="212 966 240 23">
<path d="M219.500 976.500H228.500V985.500H219.500Z" fill="#fff" stroke="#b0b0b8" stroke-width="0.800"/>
<path d="M225.500 979.500L230 984" stroke="#c88820" stroke-width="2.600" stroke-linecap="round"/><path d="M225.800 979.800L229.500 983.500" stroke="#f4c060" stroke-width="1" stroke-linecap="round"/>
<circle cx="222" cy="975.500" r="4.800" fill="#eef2f4" stroke="#a0a8b0" stroke-width="1.200"/>
<rect x="355.500" y="970.500" width="15" height="11" rx="1" fill="#e0e0e0" stroke="#8a8a8a" stroke-width="0.800"/><rect x="357" y="972" width="12" height="8" fill="#181818"/><rect x="357" y="972" width="5" height="1.500" fill="#888"/>
<path d="M360 982H366L367.500 985H358.500Z" fill="#f0f0f0" stroke="#aaa" stroke-width="0.500"/>
</svg>
</div>
<div id="bpanel" class="abs">
<div class="abs" style="left:0;top:0;width:36px;height:34px;background:#efebe7;border-right:1px solid #c9c3ba"></div>
<div class="t" style="left:76px;top:9px;letter-spacing:-0.2px">Telesweet-Co...</div>
<div class="t" style="left:215px;top:9px;letter-spacing:-0.2px">[Licq]</div>
<div class="t" style="left:355px;top:9px;letter-spacing:-0.13px">XChat: AkeL ...</div>
<div class="t" style="left:494px;top:9px">[Входящие (...</div>
<div class="t" style="left:633px;top:9px">[java - Обозр...</div>
<div class="t" style="left:773px;top:9px">Сеанс по умо...</div>
<div class="abs" style="left:883px;top:0;width:139px;height:34px;background:#dbd6ce;border:1px solid #9d978c;border-bottom:none;border-right-color:#f4f2ee"></div>
<div class="t" style="left:913px;top:9px">Yopta</div>
<div class="t" style="left:1128px;top:9px">США</div>
<div class="t" style="left:1163px;top:18px">-3 °C</div>
<div class="abs" style="left:1171px;top:1px;width:16px;height:15px;background:linear-gradient(#c4c4c4,#f6f2f2)"></div>
<div class="abs" style="left:1198px;top:0;width:40px;height:34px;background:#2e8a1e;border:1px solid #1a5a10"></div>
<div class="abs" style="left:1200px;top:8px;width:18px;height:17px;background:#3db52a;border:1px solid #e4f0dc"></div>
<div class="abs" style="left:1239px;top:1px;width:40px;height:33px;background:#b5aa99"></div>
<svg class="abs" style="left:0;top:0" width="1280" height="34" viewBox="0 990 1280 34">
<defs>
<linearGradient id="bDesk" x1="0" y1="0" x2="0" y2="1"><stop offset="0" stop-color="#c0c2b0"/><stop offset="1" stop-color="#8c9080"/></linearGradient>
<linearGradient id="bTr" x1="0" y1="0" x2="1" y2="0"><stop offset="0" stop-color="#b4c468"/><stop offset="1" stop-color="#8ca040"/></linearGradient>
</defs>
<!-- show desktop -->
<path d="M8 1000H28L32 1014H4Z" fill="url(#bDesk)" stroke="#5a5e58" stroke-width="0.800"/>
<g fill="#3a5a9a"><path d="M6 999H10V1002H6ZM26 999H30V1002H26Z"/><path d="M3 1012L7 1011L7.500 1015L3 1015.500ZM33 1012L29 1011L28.500 1015L33 1015.500Z"/></g>
<!-- grip -->
<g fill="#fff"><rect x="41" y="1003" width="2" height="2"/><rect x="41" y="1007" width="2" height="2"/><rect x="41" y="1011" width="2" height="2"/></g><g fill="#e06060"><rect x="42" y="1003" width="1" height="1"/><rect x="42" y="1007" width="1" height="1"/><rect x="42" y="1011" width="1" height="1"/></g>
<!-- firefox small -->
<circle cx="60.500" cy="1006" r="6.500" fill="url(#pFx)"/>
<path d="M52.500 1004Q52 1009.500 55 1012.500Q59 1016 64 1014Q68 1012 68 1007Q68 1003.500 66 1001.500Q66.700 1004.500 65.500 1006.500Q65 1010 61.500 1010.300Q58.500 1010.300 58 1008.500Q59.800 1008.800 60.500 1007.600L58.300 1006.200Q57.600 1005 58.700 1004Q57 1003.500 56 1002.500Q55 1001 55 1000Q53 1001.500 52.500 1004Z" fill="url(#pFox)"/>
<!-- licq flower -->
<g transform="translate(199,1007)"><g fill="#8ccc6c" stroke="#5aa040" stroke-width="0.600">
<ellipse cx="0" cy="-4.800" rx="2.600" ry="3.400"/><ellipse cx="0" cy="-4.800" rx="2.600" ry="3.400" transform="rotate(45)"/><ellipse cx="0" cy="-4.800" rx="2.600" ry="3.400" transform="rotate(90)"/><ellipse cx="0" cy="-4.800" rx="2.600" ry="3.400" transform="rotate(135)"/><ellipse cx="0" cy="-4.800" rx="2.600" ry="3.400" transform="rotate(180)"/><ellipse cx="0" cy="-4.800" rx="2.600" ry="3.400" transform="rotate(225)"/><ellipse cx="0" cy="-4.800" rx="2.600" ry="3.400" transform="rotate(270)"/><ellipse cx="0" cy="-4.800" rx="2.600" ry="3.400" transform="rotate(315)"/></g><circle r="4" fill="#8ccc6c"/><circle r="1.800" fill="#e8e870"/></g>
<!-- xchat small -->
<path d="M331.500 1002.500L334.500 1000L339.200 1005L344 1000L347 1002.500L342.200 1007L347 1011.500L344 1014L339.200 1009L334.500 1014L331.500 1011.500L336.200 1007Z" fill="url(#pX)" stroke="#c05800" stroke-width="0.300"/>
<rect x="333" y="1005.800" width="12.500" height="2.600" fill="#fff" opacity="0.700"/>
<!-- mail -->
<rect x="470.500" y="1001.500" width="14" height="10.500" rx="1" fill="#f0eeee" stroke="#b0acac" stroke-width="0.900"/><path d="M471.500 1002.500L477.500 1008L483.500 1002.500M471.500 1011L475.500 1007M483.500 1011L479.500 1007" fill="none" stroke="#c4c0c0" stroke-width="0.800"/>
<!-- file cabinet -->
<rect x="610.500" y="999" width="15" height="16" rx="1.500" fill="#e0b880" stroke="#a88858" stroke-width="0.900"/><rect x="612.500" y="1001.500" width="11" height="5" fill="#d0a468" stroke="#a88858" stroke-width="0.600"/><rect x="612.500" y="1008.500" width="11" height="5" fill="#d0a468" stroke="#a88858" stroke-width="0.600"/><rect x="616.500" y="1003.200" width="3" height="1.300" fill="#f8e8c8"/><rect x="616.500" y="1010.200" width="3" height="1.300" fill="#f8e8c8"/>
<!-- kate small -->
<g id="ksm"><path d="M749.500 1006L754 1001L763 1009.500L758 1014.500Z" fill="#8098e8" stroke="#5a72c8" stroke-width="0.600"/><path d="M751 1005.500L754.500 1002" stroke="#dce4ff" stroke-width="1.500"/><path d="M750 1007L757.500 1014" stroke="#f0e098" stroke-width="1" stroke-dasharray="1.500 1"/><path d="M757 1004.500L762 999.500L764.500 1001.500L759.500 1006.500Z" fill="#f4c030"/></g>
<!-- java small -->
<rect x="889.500" y="999.500" width="15" height="15" rx="2" fill="#f3f1ee" stroke="#8a9ab8" stroke-width="0.800"/>
<path d="M897 1001.500Q895 1003.500 896.500 1005Q898 1006.200 896.800 1007.800M898.300 1002Q897.300 1003.500 898 1004.800" fill="none" stroke="#e87818" stroke-width="1"/><path d="M893.500 1008.500H900Q900 1011.500 896.800 1011.500Q893.500 1011.500 893.500 1008.500ZM893 1013H900.500" fill="none" stroke="#5a7ab0" stroke-width="0.900"/>
<!-- trash -->
<path d="M1027 1002H1053L1051.500 1019.500Q1040 1021.500 1028.500 1019.500Z" fill="url(#bTr)" stroke="#6e7c24" stroke-width="1.200" stroke-linejoin="round"/>
<path d="M1025.500 1001.500Q1025 994 1028 993.500H1031.500L1033 992L1035.500 993.500H1039L1040.500 992L1043 993.500H1051Q1053.500 994 1053.500 1001.500Z" fill="#a8b44c" stroke="#6e7c24" stroke-width="1"/>
<path d="M1027.500 999L1029.500 995L1032.500 993.500L1034 995.500L1036.500 994L1039 995.500L1041.500 993.500L1045 996L1051 994.500L1052.500 999.500Z" fill="#f2f2f0" stroke="#a4a4a0" stroke-width="0.500"/>
<rect x="1026.500" y="999.500" width="26" height="2.500" fill="#e4e4e0" stroke="#8a8a84" stroke-width="0.400"/>
<path d="M1047.500 998Q1051 994.500 1054 997Q1056 1000 1053 1003.500Q1050 1005.500 1048 1004L1047.500 1007Z" fill="#e8e8e6" stroke="#90908c" stroke-width="0.500"/>
<g fill="#d4dca0" opacity="0.850"><path d="M1038 1006.500L1041 1005L1043 1008L1041 1010L1040 1008Z"/><path d="M1034 1010L1036.500 1009.500L1036 1012.500L1037 1014L1034.500 1014.500L1033.500 1012Z"/><path d="M1040 1014.500L1042.500 1013L1044 1014L1042.500 1016.500L1040 1017Z"/></g>
<!-- workspace kate -->
<use href="#ksm" transform="translate(1219,1000) scale(0.550) translate(-749,-999)"/>
</svg>
</div>
<div id="yopta" class="abs">
<div class="abs" style="left:0;top:0;width:600px;height:500px;background:#000"></div>
<div class="abs" style="left:1px;top:1px;width:597px;height:497px;background:#3fe021"></div>
<div class="abs" style="left:2px;top:2px;width:596px;height:496px;background:linear-gradient(#3a952b 0,#2f6c24 20px,#5a9a4a 34px,#8fc080 60px,#8fc080 100%)"></div>
<div class="abs" style="left:4px;top:22px;width:592px;height:474px;background:#000"></div>
<div class="abs" id="ycontent" style="left:5px;top:23px;width:590px;height:472px;background:#eeeeee">
<div class="jf" style="top:0"></div>
<div class="jf" style="top:39px"></div>
<div class="jf" style="top:78px"></div>
<div class="abs" style="left:0;top:158px;width:590px;height:38px;border:1px solid #7a8a99;background:linear-gradient(#dfe9f4 0,#ffffff 32%,#d4e1ee 65%,#b8cfe5 100%)"></div>
<div class="t" style="left:0;top:170px;width:590px;text-align:center;font-weight:bold;font-size:12px;color:#222;font-family:'DejaVu Sans Condensed','DejaVu Sans','Liberation Sans',sans-serif">Button1</div>
<div class="abs" style="left:2px;top:11px;width:1px;height:15px;background:#000"></div>
</div>
<div class="t" style="left:259px;top:4px;font-weight:bold;color:#fff;text-shadow:1px 1px 0 #1a3a12">Yopta</div>
<div class="wb" style="left:540px"><i class="abs" style="left:3px;top:11px;width:11px;height:3px;background:#2a2a2a"></i></div>
<div class="wb" style="left:559px"><i class="abs" style="left:3px;top:3px;width:11px;height:11px;border:1px solid #2a2a2a;border-top-width:3px"></i></div>
<div class="wb" style="left:578px"><svg class="abs" style="left:0;top:0" width="17" height="17"><path d="M3.5 3.5 L13.5 13.5 M13.5 3.5 L3.5 13.5" stroke="#2a2a2a" stroke-width="2" fill="none"/></svg></div>
<div class="abs" style="left:5px;top:3px;width:17px;height:17px;background:#f3f1ee;border-radius:3px;box-shadow:0 0 0 0.500px #c8d0c0"><svg width="17" height="17" viewBox="0 0 17 17"><path d="M8.500 2.500Q6 5 8 6.500Q9.500 8 8 9.500M10 3Q8.500 5 9.500 6.500" fill="none" stroke="#e87818" stroke-width="1.100"/><path d="M4.500 10H11.500Q11.500 13.500 8 13.500Q4.500 13.500 4.500 10ZM11.500 10.500Q13.500 10.500 12.500 12L11 12.500" fill="none" stroke="#5a7ab0" stroke-width="0.900"/><path d="M4 15H12" stroke="#5a7ab0" stroke-width="0.900"/></svg></div>
</div>
</body></html>
